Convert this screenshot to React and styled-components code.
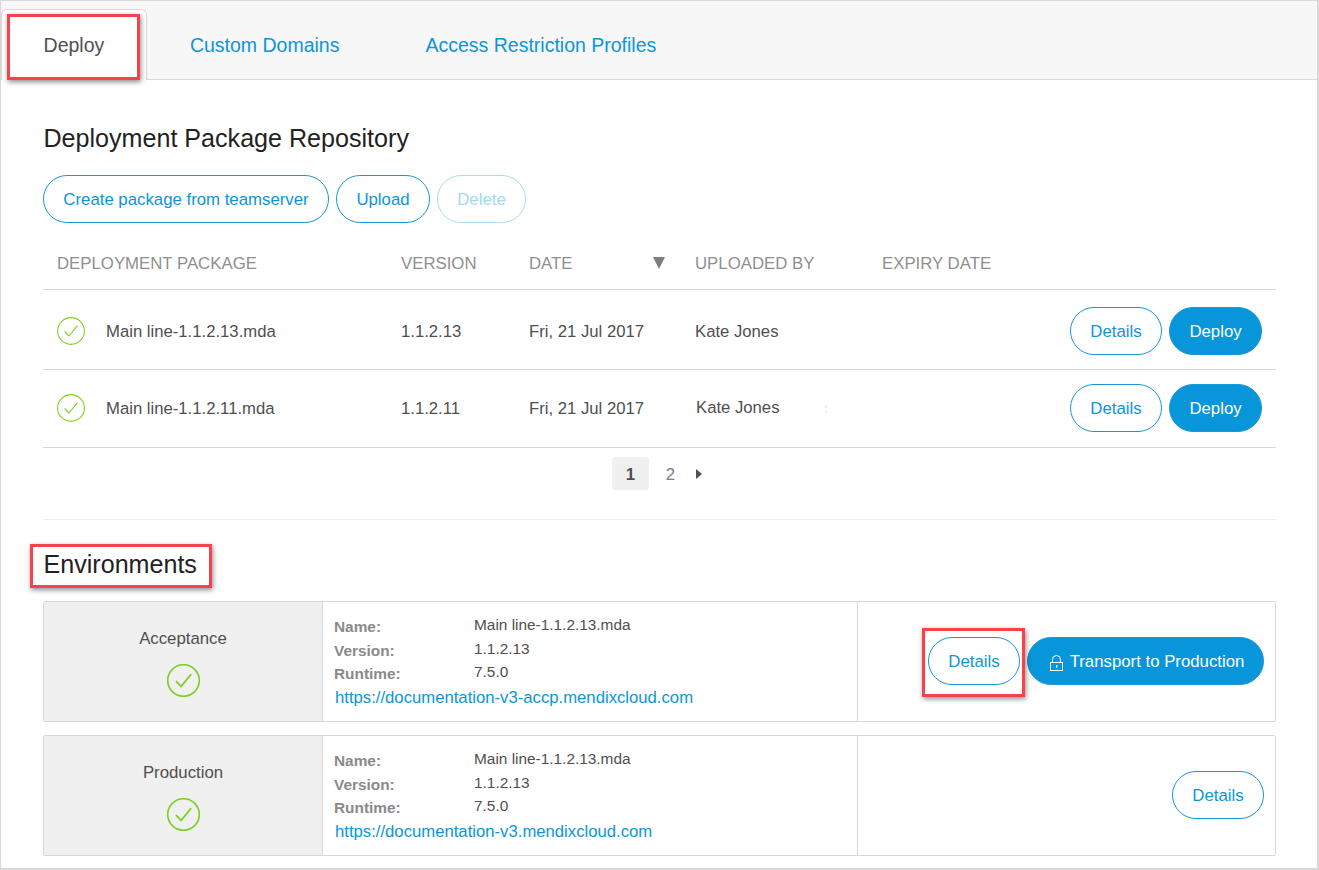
import React from "react";
import styled, { createGlobalStyle } from "styled-components";

const GlobalStyle = createGlobalStyle`
    html, body { margin: 0; padding: 0; background: #fff; }
    body { font-family: "Liberation Sans", Arial, sans-serif; }
`

const Frame = styled.div`
    position: relative;
    box-sizing: border-box;
    width: 1319px;
    height: 870px;
    border: 1px solid #d8d8d8;
    border-width: 1px 2px 2px 1px;
    overflow: hidden;
    background: #fff;
`

const TabBar = styled.div`
    display: flex;
    box-sizing: border-box;
    height: 79px;
    padding-top: 8px;
    background: #f7f7f7;
    border-bottom: 1px solid #d8d8d8;
`

const Tab = styled.div`
    box-sizing: border-box;
    height: 71px;
    padding: ${p => p.$active ? 0 : 1}px ${p => p.$pad}px 0;
    line-height: 71px;
    font-size: 19.5px;
    color: ${p => p.$active ? "#4f4f4f" : "#0c95da"};
    ${p => p.$active && `
        background: #fff;
        border: 1px solid #d8d8d8;
        border-bottom: 0;
        border-radius: 6px 6px 0 0;
    `}
`

const Content = styled.div`
    padding: 0 41px 0 42px;
`

const Title = styled.h2`
    margin: 0;
    font-weight: 400;
    font-size: 25.1px;
    line-height: 30px;
    color: #222;
    padding-top: ${p => p.$top}px;
    padding-left: 0.5px;
`

const Actions = styled.div`
    display: flex;
    gap: 7px;
    padding-top: 22px;
`

const Button = styled.div`
    box-sizing: border-box;
    display: flex;
    align-items: center;
    justify-content: center;
    gap: 6px;
    height: 48px;
    width: ${p => p.$w}px;
    padding-top: 1px;
    border-radius: 24px;
    border: 1px solid ${p => p.$faded ? "#a8dcf2" : "#1a97d8"};
    background: ${p => p.$primary ? "#0796da" : "#fff"};
    color: ${p => p.$primary ? "#fff" : p.$faded ? "#a3d9f2" : "#0c95da"};
    font-size: 16.8px;
    white-space: nowrap;
`

const Row = styled.div`
    display: grid;
    grid-template-columns: 344px 128px 166px 187px 1fr auto;
    align-items: center;
    height: ${p => p.$h}px;
    padding: ${p => p.$top || 0}px 14px ${p => p.$bottom || 0}px;
    border-bottom: 1px solid #d8d8d8;
    font-size: 16.7px;
    color: #4f4f4f;
`

const HeadRow = styled(Row)`
    margin-top: 14px;
    font-size: 16.8px;
    color: #8f8f8f;
`

const Cell = styled.div`
    padding-top: 2px;
`

const DateHead = styled.div`
    display: flex;
    justify-content: space-between;
    align-items: center;
    padding-right: 30px;
`

const SortArrow = styled.span`
    width: 0;
    height: 0;
    border-left: 6.5px solid transparent;
    border-right: 6.5px solid transparent;
    border-top: 12px solid #7d7d7d;
`

const PackageCell = styled.div`
    display: flex;
    align-items: center;
    gap: 21px;
`

const Uploader = styled.div`
    display: flex;
    align-items: center;
    padding-left: ${p => p.$nudge ? 1 : 0}px;
    margin-top: ${p => p.$nudge ? -2 : 0}px;
`

const Speck = styled.span`
    margin-left: 45px;
    font-size: 11px;
    color: #b9cbd4;
`

const RowActions = styled.div`
    display: flex;
    gap: 7px;
`

const Pagination = styled.div`
    display: flex;
    align-items: flex-start;
    justify-content: center;
    box-sizing: border-box;
    height: 72px;
    padding: 9px 5px 0 0;
    border-bottom: 1px solid #efefef;
    font-size: 16.8px;
    line-height: 35px;
    color: #808080;
`

const PageBox = styled.div`
    width: 37px;
    height: 33px;
    text-align: center;
    font-weight: 700;
    color: #4f4f4f;
    background: #f0f0f0;
    border-radius: 3px;
`

const PageNum = styled.div`
    margin-left: 17px;
`

const NextArrow = styled.span`
    margin: 12px 0 0 21px;
    width: 0;
    height: 0;
    border-top: 5px solid transparent;
    border-bottom: 5px solid transparent;
    border-left: 6px solid #505050;
`

const EnvList = styled.div`
    display: flex;
    flex-direction: column;
    gap: 13px;
    padding-top: 22px;
`

const EnvCard = styled.div`
    box-sizing: border-box;
    display: grid;
    grid-template-columns: 279px 535px 1fr;
    height: 121px;
    border: 1px solid #d8d8d8;
    border-radius: 2px;
`

const EnvName = styled.div`
    display: flex;
    flex-direction: column;
    align-items: center;
    gap: 15px;
    padding-top: 27px;
    box-sizing: border-box;
    background: #f0f0f0;
    border-right: 1px solid #d8d8d8;
    font-size: 16.8px;
    line-height: 20px;
    color: #4f4f4f;
`

const EnvInfo = styled.div`
    padding: 14px 0 0 11px;
    border-right: 1px solid #d8d8d8;
`

const InfoLine = styled.div`
    display: flex;
    height: 23.6px;
`

const InfoLabel = styled.div`
    width: 140px;
    padding-top: 2px;
    font-size: 15.4px;
    font-weight: 700;
    color: #8a8a8a;
`

const InfoValue = styled.div`
    font-size: 15.4px;
    color: #4f4f4f;
`

const EnvLink = styled.div`
    padding-left: 1px;
    font-size: 16.7px;
    line-height: 22px;
    color: #0c95da;
`

const EnvActions = styled.div`
    display: flex;
    align-items: center;
    justify-content: flex-end;
    gap: 7px;
    padding: 0 11px 1px 0;
`

const LockWrap = styled.span`
    display: flex;
    margin: 2px 1px 0 3px;
`

// red annotation boxes that were painted over the screenshot
const Highlight = styled.div`
    position: absolute;
    box-sizing: border-box;
    left: ${p => p.$x - 1}px;
    top: ${p => p.$y - 1}px;
    width: ${p => p.$w}px;
    height: ${p => p.$h}px;
    border: 3px solid #f6424a;
    box-shadow: 1px 2px 5px rgba(0, 0, 0, 0.45);
`

function CheckIcon({size, weight}){
    return(
        <svg width={size} height={size} viewBox="0 0 28 28" fill="none" style={{flex: "none"}}>
            <circle cx="14" cy="14" r="13.4" stroke="#7fcf22" strokeWidth={weight}/>
            <path d="M7.6 14.5 L12 19 L20.5 8.6" stroke="#7fcf22" strokeWidth={weight}/>
        </svg>
    )
}

function LockIcon(){
    return(
        <svg width="13" height="16" viewBox="0 0 13 16" fill="none" style={{flex: "none"}}>
            <rect x="0.5" y="7.5" width="12" height="8" stroke="#fff"/>
            <path d="M2.5 7.5 V4.5 a4 4 0 0 1 8 0 V7.5" stroke="#fff"/>
            <rect x="6" y="10" width="1.4" height="2.6" fill="#fff"/>
        </svg>
    )
}

const packages = [
    {name: "Main line-1.1.2.13.mda", version: "1.1.2.13", h: 76, top: 3},
    {name: "Main line-1.1.2.11.mda", version: "1.1.2.11", h: 76, bottom: 1, odd: true},
]

const environments = [
    {name: "Acceptance", url: "https://documentation-v3-accp.mendixcloud.com", transport: true},
    {name: "Production", url: "https://documentation-v3.mendixcloud.com"},
]

export default function App(){
    const rows = packages.map(i =>
        <Row key={i.name} $h={i.h} $top={i.top} $bottom={i.bottom}>
            <PackageCell><CheckIcon size={28} weight={1.1}/><Cell>{i.name}</Cell></PackageCell>
            <Cell>{i.version}</Cell>
            <Cell>Fri, 21 Jul 2017</Cell>
            <Cell><Uploader $nudge={i.odd}>Kate Jones{i.odd && <Speck>:</Speck>}</Uploader></Cell>
            <div/>
            <RowActions>
                <Button $w={92}>Details</Button>
                <Button $w={93} $primary>Deploy</Button>
            </RowActions>
        </Row>
    )
    const envs = environments.map(i =>
        <EnvCard key={i.name}>
            <EnvName>{i.name}<CheckIcon size={33} weight={1.4}/></EnvName>
            <EnvInfo>
                <InfoLine><InfoLabel>Name:</InfoLabel><InfoValue>Main line-1.1.2.13.mda</InfoValue></InfoLine>
                <InfoLine><InfoLabel>Version:</InfoLabel><InfoValue>1.1.2.13</InfoValue></InfoLine>
                <InfoLine><InfoLabel>Runtime:</InfoLabel><InfoValue>7.5.0</InfoValue></InfoLine>
                <EnvLink>{i.url}</EnvLink>
            </EnvInfo>
            <EnvActions>
                <Button $w={92}>Details</Button>
                {i.transport && <Button $w={237} $primary><LockWrap><LockIcon/></LockWrap>Transport to Production</Button>}
            </EnvActions>
        </EnvCard>
    )
    return(
        <Frame>
            <GlobalStyle/>
            <TabBar>
                <Tab $active $pad={41.6}>Deploy</Tab>
                <Tab $pad={43}>Custom Domains</Tab>
                <Tab $pad={43}>Access Restriction Profiles</Tab>
            </TabBar>
            <Content>
                <Title $top={43}>Deployment Package Repository</Title>
                <Actions>
                    <Button $w={286}>Create package from teamserver</Button>
                    <Button $w={94}>Upload</Button>
                    <Button $w={89} $faded>Delete</Button>
                </Actions>
                <HeadRow $h={52}>
                    <Cell>DEPLOYMENT PACKAGE</Cell>
                    <Cell>VERSION</Cell>
                    <DateHead><Cell>DATE</Cell><SortArrow/></DateHead>
                    <Cell>UPLOADED BY</Cell>
                    <Cell>EXPIRY DATE</Cell>
                </HeadRow>
                {rows}
                <Pagination>
                    <PageBox>1</PageBox>
                    <PageNum>2</PageNum>
                    <NextArrow/>
                </Pagination>
                <Title $top={29}>Environments</Title>
                <EnvList>{envs}</EnvList>
            </Content>
            <Highlight $x={7} $y={14} $w={133} $h={66}/>
            <Highlight $x={30} $y={544} $w={182} $h={44}/>
            <Highlight $x={922} $y={628} $w={103} $h={69}/>
        </Frame>
    )
}
